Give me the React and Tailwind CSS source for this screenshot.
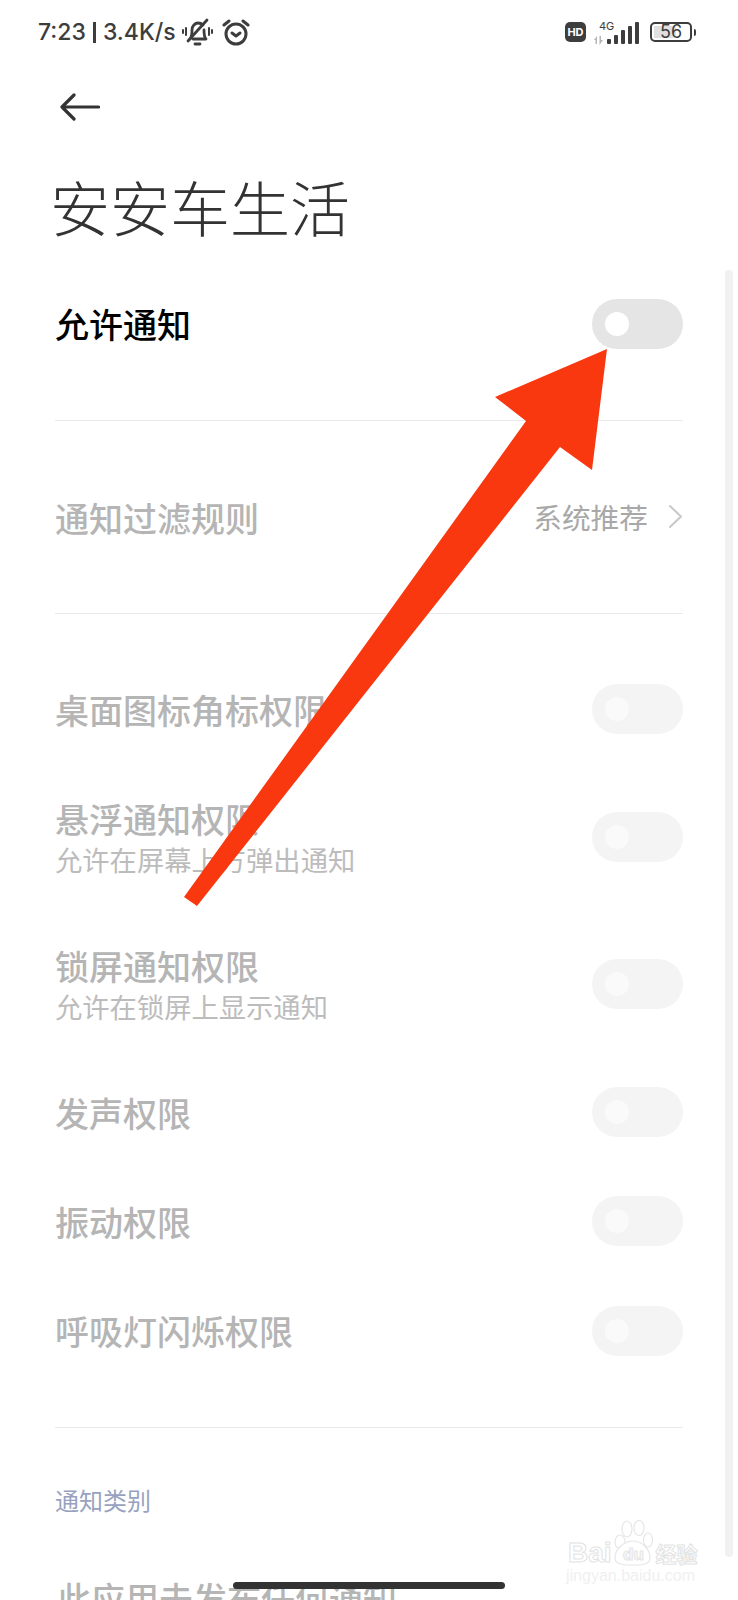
const cjk = { fontFamily: '"Noto Sans CJK SC", "Noto Sans", sans-serif' };

function Toggle({ active }) {
  return (
    <div className={`flex h-[50px] w-[91px] shrink-0 items-center rounded-full pl-[13px] ${active ? "bg-[#e5e5e5]" : "bg-[#f4f4f4]"}`}>
      <div className={`h-[24px] w-[24px] rounded-full ${active ? "bg-white" : "bg-[#fafafa]"}`} />
    </div>
  );
}

function ToggleRow({ title, sub, height }) {
  return (
    <div className={`flex items-center justify-between ${height}`}>
      <div className={sub ? "pt-[4px]" : ""}>
        <div className="text-[34px] leading-[41px] font-medium text-[#b5b5b5]">{title}</div>
        {sub && <div className="text-[27.3px] leading-[41px] text-[#bcbcbc]">{sub}</div>}
      </div>
      <Toggle />
    </div>
  );
}

function StatusBar() {
  return (
    <div className="flex h-[64px] items-center justify-between pr-[42px] pl-[38px] text-[#3d3d3d]">
      <div className="flex items-center">
        <span className="flex items-center text-[23px] font-medium" style={{ fontFamily: "Inter, sans-serif" }}>
          7:23
          <span className="mx-[7px] h-[21px] w-[3px] bg-[#3d3d3d]" />
          3.4K/s
        </span>
        <svg className="ml-[6px]" width="31" height="28" viewBox="0 0 31 28" fill="none" stroke="#3d3d3d" strokeWidth="2.8" strokeLinecap="round" strokeLinejoin="round">
          <path d="M8 21c2-2 2-5 2-9 0-4 3-7 6-7 2 0 4 1 5 2M22 12c0 4 0 7 2 9H11" />
          <path d="M13 26h5" />
          <path d="M6 23L25 2" />
          <path d="M4 10v7M1 12v3M27 10v7M30 12v3" strokeWidth="2" />
        </svg>
        <svg className="ml-[9px]" width="28" height="27" viewBox="0 0 28 27" fill="none" stroke="#3d3d3d" strokeWidth="3" strokeLinecap="round" strokeLinejoin="round">
          <circle cx="14" cy="15" r="10" />
          <path d="M10 14l4 3 4-3" />
          <path d="M2 6l5-4M26 6l-5-4" />
        </svg>
      </div>
      <div className="flex items-center">
        <div className="flex h-[20px] w-[21px] items-center justify-center rounded-[5px] bg-[#3d3d3d] text-[11px] leading-none font-bold text-white" style={{ fontFamily: "Inter, sans-serif" }}>HD</div>
        <svg className="ml-[8px]" width="46" height="26" viewBox="0 0 46 26" fill="#3d3d3d">
          <text x="5" y="11" fontSize="11" fontFamily="Inter, sans-serif">4G</text>
          <path d="M0 21l3-4v8h-1.500v-4zM5.500 17H7v4h2l-3.500 5z" fill="#b5b5b5" />
          <rect x="13" y="20" width="4" height="5" rx="1" />
          <rect x="20" y="16" width="4" height="9" rx="1" />
          <rect x="27" y="11" width="4" height="14" rx="1" />
          <rect x="34" y="7" width="4" height="18" rx="1" />
          <rect x="41" y="3" width="4" height="22" rx="1" />
        </svg>
        <div className="relative ml-[10px] flex h-[20px] w-[42px] items-center justify-center rounded-[5px] border-2 border-[#3d3d3d] text-[18px] leading-none" style={{ fontFamily: "Inter, sans-serif" }}>
          <div className="absolute top-[2px] bottom-[2px] left-[2px] w-[22px] bg-[#e0e0e0]" />
          <span className="relative">56</span>
        </div>
        <div className="ml-[2px] h-[7px] w-[2px] rounded-r bg-[#3d3d3d]" />
      </div>
    </div>
  );
}

export default function App() {
  return (
    <div className="relative h-[1600px] w-[738px] overflow-hidden bg-white" style={cjk}>
      <StatusBar />

      <div className="flex h-[86px] items-center pl-[60px]">
        <svg width="40" height="28" viewBox="0 0 40 28" fill="none" stroke="#333" strokeWidth="3.2" strokeLinecap="round" strokeLinejoin="round">
          <path d="M38.500 14H2M14 2L2 14l12 12" />
        </svg>
      </div>

      <h1 className="flex h-[120px] items-center pb-[8px] pl-[50px] text-[60px] font-light text-[#333]">安安车生活</h1>

      <div className="px-[55px]">
        <div className="flex h-[151px] items-start justify-between border-b border-[#e9e9e9] pt-[29px]">
          <span className="text-[34px] leading-[50px] font-medium text-black">允许通知</span>
          <Toggle active />
        </div>

        <div className="flex h-[193px] items-center justify-between border-b border-[#e9e9e9]">
          <span className="text-[34px] font-medium text-[#b5b5b5]">通知过滤规则</span>
          <div className="flex items-center text-[28.7px] text-[#a8a8a8]">
            系统推荐
            <svg className="ml-[20px]" width="15" height="25" viewBox="0 0 15 25" fill="none" stroke="#c8c8c8" strokeWidth="2" strokeLinecap="round" strokeLinejoin="round">
              <path d="M2 2l11 10.500L2 23" />
            </svg>
          </div>
        </div>

        <div className="border-b border-[#e9e9e9] pt-[40px] pb-[41px]">
          <ToggleRow title="桌面图标角标权限" height="h-[110px]" />
          <ToggleRow title="悬浮通知权限" sub="允许在屏幕上方弹出通知" height="h-[146px]" />
          <ToggleRow title="锁屏通知权限" sub="允许在锁屏上显示通知" height="h-[147px]" />
          <ToggleRow title="发声权限" height="h-[110px]" />
          <ToggleRow title="振动权限" height="h-[108px]" />
          <ToggleRow title="呼吸灯闪烁权限" height="h-[111px]" />
        </div>

        <div className="flex h-[144px] items-center text-[24px] text-[#98a2c0]">通知类别</div>
        <div className="pt-[6px] pl-[2px] text-[34px] leading-[40px] font-medium text-[#b5b5b5]">此应用未发布任何通知</div>
      </div>

      {/* scrollbar */}
      <div className="absolute top-[270px] left-[725px] h-[1287px] w-[8px] rounded-full bg-[#f1f1f1]" />

      {/* home bar */}
      <div className="absolute top-[1582px] left-[233px] h-[7px] w-[272px] rounded-full bg-[#333]" />

      {/* annotation arrow */}
      <svg className="absolute top-0 left-0" width="738" height="1600" viewBox="0 0 738 1600">
        <polygon points="607,349 495,397 526,421 184,897 197,906 560,447 592,470" fill="#f93810" />
      </svg>

      {/* baidu watermark */}
      <div className="absolute top-[1520px] left-[566px] w-[134px]">
        <svg className="absolute top-0 left-[46px]" width="42" height="46" viewBox="0 0 42 46" fill="white" stroke="#e6e6e6" strokeWidth="1.2">
          <ellipse cx="8" cy="22" rx="5" ry="7" />
          <ellipse cx="15" cy="9" rx="5" ry="8" />
          <ellipse cx="27" cy="8" rx="5" ry="7.500" />
          <ellipse cx="36" cy="20" rx="4.500" ry="7" />
          <path d="M3 38c0-10 10-17 18-17s17 7 17 17c0 6-6 7-17 7S3 44 3 38z" />
          <text x="11" y="40" fontSize="17" fontWeight="700" fontFamily='"Liberation Sans", sans-serif' fill="white">du</text>
        </svg>
        <div className="mt-[17px] flex items-center text-[28px] leading-[32px] font-bold text-white [-webkit-text-stroke:1px_#e3e3e3]" style={{ fontFamily: '"Liberation Sans", sans-serif' }}>
          <span className="ml-[2px]">Bai</span>
          <span className="ml-[44px] text-[21px]" style={cjk}>经验</span>
        </div>
        <div className="mt-[-3px] text-[16px] leading-[20px] text-[#f0f0f0]" style={{ fontFamily: '"Liberation Sans", sans-serif' }}>jingyan.baidu.com</div>
      </div>
    </div>
  );
}
